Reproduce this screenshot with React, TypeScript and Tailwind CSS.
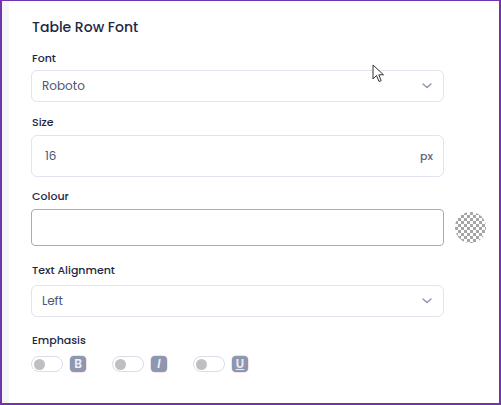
import React from "react";

const font = { fontFamily: "Poppins, Inter, 'Noto Sans', sans-serif" };

function Chevron() {
  return (
    <svg width="10" height="6" viewBox="0 0 10 6" fill="none">
      <path d="M1 1l4 3.5L9 1" stroke="#8a91a8" strokeWidth="1.3" strokeLinecap="round" strokeLinejoin="round" />
    </svg>
  );
}

function Toggle() {
  return (
    <div className="w-[32px] h-[16px] rounded-full border border-[#d9dcea] bg-white flex items-center pl-[2px]">
      <div className="w-[11px] h-[11px] rounded-full bg-[#bfbfc2]" />
    </div>
  );
}

function Badge({ children, cls }: { children: React.ReactNode; cls: string }) {
  return (
    <div className={"w-[16px] h-[16px] rounded-[4px] bg-[#8e97b2] shadow-[0_0_0_0.5px_#e8c8c8] flex items-center justify-center text-[12px] leading-none text-[#eef0f6] " + cls}>
      {children}
    </div>
  );
}

export default function App() {
  return (
    <div style={font} className="relative w-[501px] h-[405px] border-l-2 border-t border-r-2 border-b-2 border-[#7433ae] bg-white flex overflow-hidden">
      <div className="w-[7px] bg-[#f5f5f7]" />
      <div className="flex-1 pl-[22px] pt-[16px] flex flex-col">
        <div className="text-[14px] leading-[20px] font-medium text-[#1d2645] pl-[1px]">Table Row Font</div>

        <div className="mt-[13px] text-[11px] leading-[16px] font-medium text-[#1d2645] pl-[1px]">Font</div>
        <div className="mt-[4px] w-[413px] h-[32px] rounded-[6px] border border-[#e1e3ef] flex items-center justify-between pl-[10px] pr-[11px]">
          <span className="text-[12px] text-[#4b5672]">Roboto</span>
          <Chevron />
        </div>

        <div className="mt-[12px] text-[11px] leading-[16px] font-medium text-[#1d2645] pl-[1px]">Size</div>
        <div className="mt-[5px] w-[413px] h-[42px] rounded-[6px] border border-[#e1e3ef] flex items-center justify-between pl-[13px] pr-[10px]">
          <span className="text-[12px] text-[#4b5672]">16</span>
          <span className="text-[11px] font-medium text-[#5a6480]">px</span>
        </div>

        <div className="mt-[11px] text-[11px] leading-[16px] font-medium text-[#1d2645] pl-[1px]">Colour</div>
        <div className="mt-[5px] flex items-center gap-[11px]">
          <div className="w-[413px] h-[37px] rounded-[4px] border border-[#a9a9b8] bg-white" />
          <div className="w-[31px] h-[31px] rounded-full bg-[repeating-conic-gradient(#9c9c9c_0%_25%,#ffffff_0%_50%)] bg-[length:6px_6px] opacity-90" />
        </div>

        <div className="mt-[16px] text-[11px] leading-[16px] font-medium text-[#1d2645] pl-[1px]">Text Alignment</div>
        <div className="mt-[7px] w-[413px] h-[32px] rounded-[6px] border border-[#e1e3ef] flex items-center justify-between pl-[10px] pr-[11px]">
          <span className="text-[12px] text-[#4b5672]">Left</span>
          <Chevron />
        </div>

        <div className="mt-[15px] text-[11px] leading-[16px] font-medium text-[#1d2645] pl-[1px]">Emphasis</div>
        <div className="mt-[8px] flex items-center">
          <Toggle />
          <div className="ml-[7px]"><Badge cls="font-semibold">B</Badge></div>
          <div className="ml-[26px]"><Toggle /></div>
          <div className="ml-[7px]"><Badge cls="italic font-semibold" >I</Badge></div>
          <div className="ml-[26px]"><Toggle /></div>
          <div className="ml-[7px]"><Badge cls="underline font-semibold">U</Badge></div>
        </div>
      </div>

      <svg className="absolute left-[370px] top-[63px]" width="14" height="20" viewBox="0 0 14 20">
        <path d="M1 1 L1 15 L4.5 11.5 L7 17.5 L9.2 16.6 L6.8 10.8 L11.5 10.8 Z" fill="#ffffff" stroke="#333" strokeWidth="1" strokeLinejoin="round" />
      </svg>
    </div>
  );
}
